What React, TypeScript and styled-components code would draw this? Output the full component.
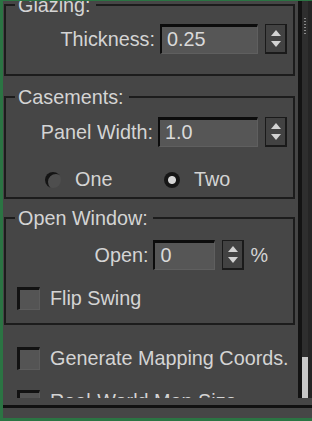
import styled, { createGlobalStyle } from "styled-components";

const Global = createGlobalStyle`
  html, body {
    margin: 0;
    padding: 0;
    background: #464646;
  }
  * {
    box-sizing: border-box;
  }
`;

const Frame = styled.div`
  width: 312px;
  height: 421px;
  background: #464646;
  border-left: 3px solid #2b7443;
  border-top: 1px solid #2b7443;
  border-bottom: 3px solid #2b7443;
  display: flex;
  flex-direction: column;
  font-family: "Liberation Sans", Arial, sans-serif;
  font-size: 19.8px;
  color: #d4d4d4;
  overflow: hidden;
`;

const Viewport = styled.div`
  height: 397px;
  display: flex;
  overflow: hidden;
`;

const Content = styled.div`
  flex: 1;
  overflow: hidden;
`;

// scroll offset of the rollout
const Scrolled = styled.div`
  margin-top: -6px;
  display: flex;
  flex-direction: column;
`;

const Group = styled.fieldset<{ $top: number; $bottom: number; $gap?: number }>`
  margin: ${(p) => p.$gap ?? 0}px 3px 0 1px;
  padding: ${(p) => p.$top}px 0 ${(p) => p.$bottom}px 0;
  border: 2px solid #1c1c1c;
  min-width: 0;
  display: flex;
  flex-direction: column;
`;

const Title = styled.legend`
  margin-left: 9px;
  padding: 0 5px 0 3px;
  line-height: 20px;
  height: 20px;
`;

const ValueRow = styled.div<{ $pr: number; $gap?: number }>`
  display: flex;
  align-items: center;
  justify-content: flex-end;
  height: 30px;
  padding-right: ${(p) => p.$pr}px;
  margin-top: ${(p) => p.$gap ?? 0}px;
`;

const Label = styled.span`
  margin-right: 5px;
  white-space: nowrap;
`;

const Field = styled.div<{ $w: number }>`
  width: ${(p) => p.$w}px;
  height: 30px;
  background: #565656;
  border-top: 3px solid #0c0c0c;
  border-left: 2px solid #0c0c0c;
  border-right: 1px solid #5f5f5f;
  border-bottom: 1px solid #5f5f5f;
  padding-left: 5px;
  line-height: 25px;
  color: #dadada;
`;

const Spinner = styled.div`
  width: 22px;
  height: 30px;
  margin-left: 7px;
  background: #424242;
  border: 1px solid #1a1a1a;
  border-right-width: 2px;
  border-bottom-width: 2px;
  display: flex;
  flex-direction: column;
  align-items: center;
  justify-content: center;
  gap: 5px;
`;

const Arrow = styled.span<{ $up?: boolean }>`
  width: 0;
  height: 0;
  border-left: 5px solid transparent;
  border-right: 5px solid transparent;
  ${(p) =>
    p.$up
      ? "border-bottom: 6px solid #d2d2d2;"
      : "border-top: 6px solid #d2d2d2;"}
`;

const Unit = styled.span`
  margin-left: 6px;
`;

const RadioRow = styled.div`
  display: grid;
  grid-template-columns: 119px auto;
  align-items: center;
  height: 20px;
  margin-top: 21px;
  padding-left: 39px;
`;

const RadioOption = styled.label`
  display: flex;
  align-items: center;
  gap: 14px;
`;

const RadioDot = styled.span<{ $on?: boolean }>`
  width: 16px;
  height: 16px;
  border-radius: 50%;
  ${(p) =>
    p.$on
      ? "background: radial-gradient(circle, #d6d6d6 0 3.5px, #161616 4.5px);"
      : "background: #4e4e4e; box-shadow: inset 3px 2px 0 #141414;"}
`;

const CheckRow = styled.label<{ $pl: number; $gap: number }>`
  display: flex;
  align-items: center;
  gap: 10px;
  height: 23px;
  padding-left: ${(p) => p.$pl}px;
  margin-top: ${(p) => p.$gap}px;
  white-space: nowrap;
`;

const Box = styled.span`
  width: 23px;
  height: 23px;
  flex: none;
  background: #545454;
  border-top: 3px solid #121212;
  border-left: 3px solid #121212;
  border-right: 1px solid #5c5c5c;
  border-bottom: 1px solid #5c5c5c;
`;

const Scrollbar = styled.div`
  width: 14px;
  background: #2e2e2e;
  border-left: 4px solid #131313;
  border-right: 4px solid #252525;
  display: flex;
  flex-direction: column;
  align-items: center;
`;

const Grip = styled.span`
  width: 2px;
  height: 18px;
  margin-top: 17px;
  background: repeating-linear-gradient(#8a8a8a 0 1px, transparent 1px 3px);
`;

const Thumb = styled.span`
  width: 6px;
  height: 41px;
  margin-top: auto;
  background: #c8c8c8;
`;

const Footer = styled.div`
  flex: 1;
  padding-top: 7px;
`;

const Rule = styled.div`
  height: 3px;
  background: #111;
`;

export default function App() {
  return (
    <>
      <Global />
      <Frame>
        <Viewport>
          <Content>
            <Scrolled>
              <Group $top={9} $bottom={20}>
                <Title>Glazing:</Title>
                <ValueRow $pr={6}>
                  <Label>Thickness:</Label>
                  <Field $w={98}>0.25</Field>
                  <Spinner>
                    <Arrow $up />
                    <Arrow />
                  </Spinner>
                </ValueRow>
              </Group>

              <Group $top={10} $bottom={9} $gap={11}>
                <Title>Casements:</Title>
                <ValueRow $pr={6}>
                  <Label>Panel Width:</Label>
                  <Field $w={100}>1.0</Field>
                  <Spinner>
                    <Arrow $up />
                    <Arrow />
                  </Spinner>
                </ValueRow>
                <RadioRow>
                  <RadioOption>
                    <RadioDot />
                    One
                  </RadioOption>
                  <RadioOption>
                    <RadioDot $on />
                    Two
                  </RadioOption>
                </RadioRow>
              </Group>

              <Group $top={12} $bottom={13} $gap={9}>
                <Title>Open Window:</Title>
                <ValueRow $pr={25}>
                  <Label>Open:</Label>
                  <Field $w={62}>0</Field>
                  <Spinner>
                    <Arrow $up />
                    <Arrow />
                  </Spinner>
                  <Unit>%</Unit>
                </ValueRow>
                <CheckRow $pl={11} $gap={17}>
                  <Box />
                  Flip Swing
                </CheckRow>
              </Group>

              <CheckRow $pl={14} $gap={22}>
                <Box />
                Generate Mapping Coords.
              </CheckRow>
              <CheckRow $pl={14} $gap={20}>
                <Box />
                Real-World Map Size
              </CheckRow>
            </Scrolled>
          </Content>
          <Scrollbar>
            <Grip />
            <Thumb />
          </Scrollbar>
        </Viewport>
        <Footer>
          <Rule />
        </Footer>
      </Frame>
    </>
  );
}
